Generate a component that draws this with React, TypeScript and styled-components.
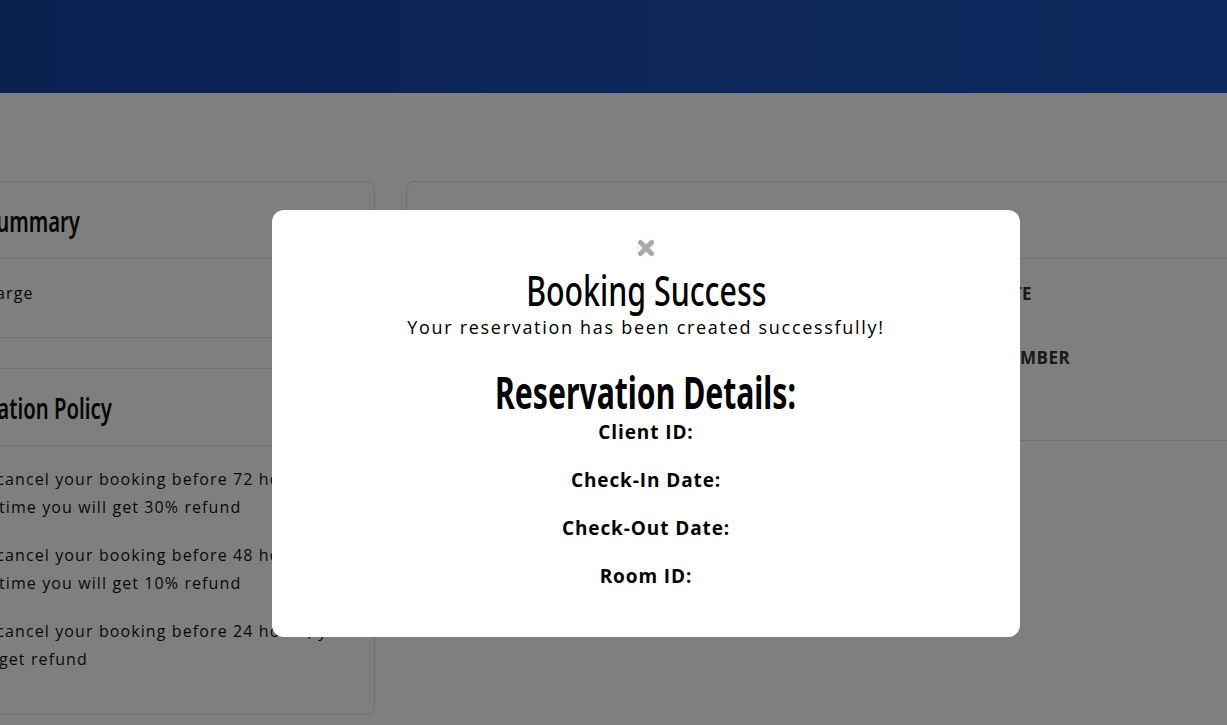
import React from 'react';
import styled, { createGlobalStyle } from 'styled-components';

const HEAD = `"Noto Sans", "DejaVu Sans", sans-serif`;
const BODY = `"Open Sans", "DejaVu Sans", sans-serif`;

const GlobalStyle = createGlobalStyle`
  html, body { margin: 0; padding: 0; background: #fff; overflow: hidden; }
  body { font-family: ${BODY}; color: #111; }
  * { box-sizing: border-box; }
`;

const Header = styled.header`
  height: 93px;
  background: linear-gradient(90deg, #1442a0 0%, #1a4cb0 45%, #1854bc 100%);
`;

const Main = styled.main`
  display: flex;
  justify-content: center;
  overflow: hidden;
  padding-top: 88px;
`;

const Container = styled.div`
  flex: 0 0 auto;
  width: 1461px;
  display: flex;
  gap: 31px;
  align-items: flex-start;
`;

const Card = styled.section<{ $width: number }>`
  flex: 0 0 ${p => p.$width}px;
  min-width: 0;
  overflow: hidden;
  border: 1px solid #dedede;
  border-radius: 8px;
  background: #fff;
`;

const CardHead = styled.div<{ $top?: boolean; $pad?: number }>`
  height: ${p => (p.$top ? 78 : 77)}px;
  display: flex;
  align-items: center;
  padding: 0 24px 0 ${p => p.$pad ?? 24}px;
  border-top: ${p => (p.$top ? '1px solid #dedede' : 'none')};
  border-bottom: 1px solid #dedede;
`;

/* Condensed display face (Oswald-like) made from a regular face */
const Squeeze = styled.span<{ $k: number; $origin?: string }>`
  display: inline-block;
  white-space: nowrap;
  transform: scaleX(${p => p.$k});
  transform-origin: ${p => p.$origin ?? 'center'};
`;

const CardTitle = styled.h3`
  margin: 0;
  font-family: ${HEAD};
  font-weight: 600;
  font-size: 29px;
  color: #0a0a0a;
`;

const SummaryRow = styled.div`
  height: 79px;
  padding: 22px 24px 0;
  display: flex;
  justify-content: space-between;
  font-size: 16px;
  letter-spacing: 1.1px;
  line-height: 24px;
  border-bottom: 1px solid #dedede;
  white-space: nowrap;
`;

const Spacer = styled.div`
  height: 30px;
`;

const PolicyList = styled.div`
  padding: 19px 24px 21px 115px;
`;

const PolicyText = styled.p`
  margin: 0 0 20px;
  text-indent: -56px;
  font-size: 16px;
  letter-spacing: 1.1px;
  line-height: 28px;
  color: #111;
  white-space: nowrap;
`;

const DetailGrid = styled.div`
  display: grid;
  grid-template-columns: 442px 1fr;
  column-gap: 24px;
  row-gap: 40px;
  padding: 23px 24px 70px;
`;

const DetailLabel = styled.div`
  font-size: 17px;
  line-height: 24px;
  font-weight: 700;
  letter-spacing: 0.5px;
  text-transform: uppercase;
  color: #333;
  white-space: nowrap;
`;

const Overlay = styled.div`
  position: fixed;
  inset: 0;
  background: rgba(0, 0, 0, 0.5);
  padding: 210px 0 0 272px;
`;

const Modal = styled.div`
  width: 748px;
  background: #fff;
  border-radius: 12px;
  padding: 27px 40px 47px;
  display: flex;
  flex-direction: column;
  align-items: center;
  text-align: center;
`;

const CloseButton = styled.button`
  border: 0;
  background: none;
  padding: 0;
  width: 22px;
  height: 22px;
  display: flex;
  align-items: center;
  justify-content: center;
  cursor: pointer;
`;

const ModalTitle = styled.h2`
  margin: 7px 0 0;
  font-family: ${HEAD};
  font-weight: 500;
  font-size: 41px;
  line-height: 48px;
  color: #000;
`;

const ModalText = styled.p`
  margin: 0;
  font-size: 18px;
  letter-spacing: 1.7px;
  line-height: 27px;
  color: #000;
`;

const DetailsTitle = styled.h1`
  margin: 23px 0 0;
  font-family: ${HEAD};
  font-weight: 700;
  font-size: 45px;
  line-height: 55px;
  color: #000;
`;

const DetailLine = styled.p`
  margin: 0;
  font-size: 19px;
  letter-spacing: 0.9px;
  line-height: 27px;
  font-weight: 700;
  color: #000;
  & + & { margin-top: 21px; }
`;

const CloseIcon = () => (
  <svg width="18" height="18" viewBox="0 0 18 18">
    <path d="M3.5 3.5 L14.5 14.5 M14.5 3.5 L3.5 14.5" stroke="#a9a9a9" strokeWidth="5" strokeLinecap="round" />
  </svg>
);

export default function App() {
  return (
    <>
      <GlobalStyle />
      <Header />
      <Main>
        <Container>
          <Card $width={492}>
            <CardHead $pad={14}>
              <CardTitle>
                <Squeeze $k={0.7} $origin="left">Booking Summary</Squeeze>
              </CardTitle>
            </CardHead>
            <SummaryRow>
              <span>Service Charge</span>
              <span>$0</span>
            </SummaryRow>
            <Spacer />
            <CardHead $top $pad={42}>
              <CardTitle>
                <Squeeze $k={0.7} $origin="left">Cancellation Policy</Squeeze>
              </CardTitle>
            </CardHead>
            <PolicyList>
              <PolicyText>
                If you cancel your booking before 72 hours of check-in
                <br />
                time you will get 30% refund
              </PolicyText>
              <PolicyText>
                If you cancel your booking before 48 hours of check-in
                <br />
                time you will get 10% refund
              </PolicyText>
              <PolicyText>
                If you cancel your booking before 24 hours, you will not
                <br />
                get refund
              </PolicyText>
            </PolicyList>
          </Card>
          <Card $width={938}>
            <CardHead>
              <CardTitle>
                <Squeeze $k={0.7} $origin="left">Guest Details</Squeeze>
              </CardTitle>
            </CardHead>
            <DetailGrid>
              <DetailLabel>Full Name</DetailLabel>
              <DetailLabel>Check-In Date</DetailLabel>
              <DetailLabel>Email Address</DetailLabel>
              <DetailLabel>Passport Number</DetailLabel>
            </DetailGrid>
          </Card>
        </Container>
      </Main>
      <Overlay>
        <Modal>
          <CloseButton aria-label="Close">
            <CloseIcon />
          </CloseButton>
          <ModalTitle>
            <Squeeze $k={0.74}>Booking Success</Squeeze>
          </ModalTitle>
          <ModalText>Your reservation has been created successfully!</ModalText>
          <DetailsTitle>
            <Squeeze $k={0.67}>Reservation Details:</Squeeze>
          </DetailsTitle>
          <DetailLine>Client ID:</DetailLine>
          <DetailLine>Check-In Date:</DetailLine>
          <DetailLine>Check-Out Date:</DetailLine>
          <DetailLine>Room ID:</DetailLine>
        </Modal>
      </Overlay>
    </>
  );
}
